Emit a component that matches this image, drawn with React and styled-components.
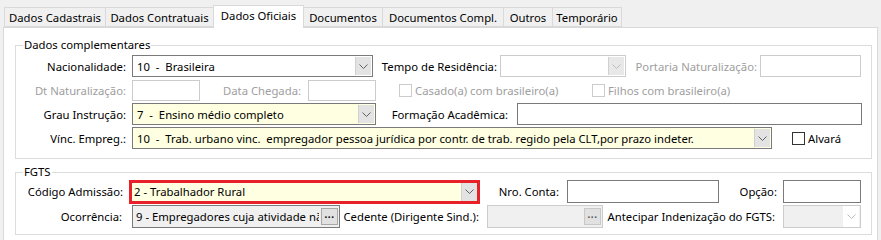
import React from "react";
import styled, { createGlobalStyle } from "styled-components";

const GlobalStyle = createGlobalStyle`
  body {
    margin: 0;
    background: #f0f0f0;
    font-family: "Noto Sans", "Segoe UI", sans-serif;
    font-size: 11.3px;
    color: #000;
  }
`;

const Page = styled.div`
  padding-top: 5px;
  width: 881px;
  height: 240px;
  overflow: hidden;
`;

const TabBar = styled.div`
  display: flex;
  align-items: flex-end;
  height: 22px;
  padding-left: 4px;
`;

const Tab = styled.div`
  box-sizing: border-box;
  width: ${(p) => p.$w}px;
  height: ${(p) => (p.$active ? 23 : 20)}px;
  margin-bottom: ${(p) => (p.$active ? -1 : 0)}px;
  margin-left: -1px;
  border: 1px solid #d9d9d9;
  border-bottom: ${(p) => (p.$active ? "none" : "1px solid #d9d9d9")};
  background: ${(p) => (p.$active ? "#fff" : "#f0f0f0")};
  position: relative;
  z-index: ${(p) => (p.$active ? 2 : 1)};
  display: flex;
  align-items: center;
  justify-content: center;
  padding-bottom: ${(p) => (p.$active ? 3 : 0)}px;
  white-space: nowrap;
  &:first-child {
    margin-left: 0;
  }
`;

const Panel = styled.div`
  box-sizing: border-box;
  margin: 0 3px;
  height: 230px;
  background: #fff;
  border: 1px solid #d9d9d9;
  padding: 10px 5px 0 11px;
`;

const Group = styled.fieldset`
  margin: 0 0 ${(p) => p.$mb || 0}px 0;
  padding: ${(p) => p.$pt}px 0 ${(p) => p.$pb}px 0;
  border: 1px solid #dcdcdc;
  min-width: 0;
`;

const Legend = styled.legend`
  margin-left: 7px;
  padding: 0 1px;
  line-height: 14px;
`;

const Row = styled.div`
  display: flex;
  align-items: center;
  height: ${(p) => p.$h}px;
`;

const Label = styled.div`
  box-sizing: border-box;
  flex: none;
  width: ${(p) => p.$w}px;
  padding-right: ${(p) => p.$pr ?? 6}px;
  text-align: right;
  white-space: nowrap;
  color: ${(p) => (p.$muted ? "#9e9e9e" : "#000")};
`;

const Edit = styled.div`
  box-sizing: border-box;
  flex: none;
  display: flex;
  align-items: center;
  width: ${(p) => p.$w}px;
  height: ${(p) => p.$h || 22}px;
  border: 1px solid ${(p) => (p.$muted ? "#cccccc" : "#7a7a7a")};
  background: ${(p) => p.$bg || "#fff"};
  overflow: hidden;
`;

const Combo = styled(Edit)`
  border: ${(p) => (p.$mark ? "3px solid #e8202a" : `1px solid ${p.$muted ? "#cccccc" : "#7a7a7a"}`)};
  padding-right: ${(p) => (p.$mark ? 0 : 1)}px;
`;

const Value = styled.span`
  flex: 1;
  min-width: 0;
  padding-left: ${(p) => p.$pl ?? 4}px;
  white-space: pre;
  overflow: hidden;
`;

const DropButton = styled.div`
  flex: none;
  align-self: stretch;
  width: 15px;
  margin: ${(p) => (p.$flat ? 0 : "1px 0")};
  display: flex;
  align-items: center;
  justify-content: center;
  background: ${(p) => (p.$muted ? "#fff" : p.$light ? "#e8e8e8" : "#e3e3e3")};
  border-left: 1px solid ${(p) => (p.$muted ? "#fff" : "#d0d0d0")};
`;

const DotsButton = styled.div`
  box-sizing: border-box;
  flex: none;
  width: 17px;
  height: 17px;
  margin: 0 1px 0 2px;
  border: 1px solid ${(p) => (p.$muted ? "#c8c8c8" : "#a8a8a8")};
  background: #e1e1e1;
  display: flex;
  align-items: center;
  justify-content: center;
  font-weight: bold;
  font-size: 10px;
  line-height: 1;
  letter-spacing: 0.5px;
  padding-bottom: 5px;
  color: ${(p) => (p.$muted ? "#555" : "#000")};
`;

const Check = styled.label`
  flex: none;
  display: flex;
  align-items: center;
  gap: 3px;
  width: ${(p) => (p.$w ? `${p.$w}px` : "auto")};
  margin-left: ${(p) => p.$ml || 0}px;
  color: ${(p) => (p.$muted ? "#9e9e9e" : "#000")};
  white-space: nowrap;
`;

const Box = styled.span`
  box-sizing: border-box;
  width: 13px;
  height: 13px;
  border: 1px solid ${(p) => (p.$muted ? "#cccccc" : "#333")};
  background: #fff;
`;

const Chevron = ({ muted }) => (
  <svg width="9" height="5" viewBox="0 0 9 5">
    <path d="M0.5 0.5 L4.5 4.5 L8.5 0.5" fill="none" stroke={muted ? "#bdbdbd" : "#606060"} strokeWidth="1" />
  </svg>
);

const YELLOW = "#ffffe1";

const tabs = [
  ["Dados Cadastrais", 102],
  ["Dados Contratuais", 109],
  ["Dados Oficiais", 91, true],
  ["Documentos", 80],
  ["Documentos Compl.", 122],
  ["Outros", 50],
  ["Temporário", 70],
];

export default function App() {
  return (
    <Page>
      <GlobalStyle />
      <TabBar>
        {tabs.map(([t, w, a]) => (
          <Tab key={t} $w={w} $active={a}>
            {t}
          </Tab>
        ))}
      </TabBar>
      <Panel>
        <Group $pt={2} $pb={8} $mb={6}>
          <Legend>Dados complementares</Legend>
          <Row $h={24}>
            <Label $w={116}>Nacionalidade:</Label>
            <Combo $w={241}>
              <Value>{"10  -  Brasileira"}</Value>
              <DropButton>
                <Chevron />
              </DropButton>
            </Combo>
            <Label $w={127} $pr={3}>Tempo de Residência:</Label>
            <Combo $w={126} $muted>
              <Value />
              <DropButton $light>
                <Chevron muted />
              </DropButton>
            </Combo>
            <Label $w={134} $pr={3} $muted>Portaria Naturalização:</Label>
            <Edit $w={101} $muted />
          </Row>
          <Row $h={24}>
            <Label $w={116} $muted>Dt Naturalização:</Label>
            <Edit $w={68} $h={21} $muted />
            <Label $w={108} $pr={7} $muted>Data Chegada:</Label>
            <Edit $w={68} $h={21} $muted />
            <Check $ml={23} $w={193} $muted>
              <Box $muted />
              Casado(a) com brasileiro(a)
            </Check>
            <Check $muted>
              <Box $muted />
              Filhos com brasileiro(a)
            </Check>
          </Row>
          <Row $h={24}>
            <Label $w={116}>Grau Instrução:</Label>
            <Combo $w={244} $bg={YELLOW}>
              <Value>{"7  -  Ensino médio completo"}</Value>
              <DropButton>
                <Chevron />
              </DropButton>
            </Combo>
            <Label $w={141} $pr={9}>Formação Acadêmica:</Label>
            <Edit $w={345} />
          </Row>
          <Row $h={24}>
            <Label $w={116}>Vínc. Empreg.:</Label>
            <Combo $w={640} $bg={YELLOW}>
              <Value>
                {"10  -  Trab. urbano vinc.  empregador pessoa jurídica por contr. de trab. regido pela CLT,por prazo indeter."}
              </Value>
              <DropButton>
                <Chevron />
              </DropButton>
            </Combo>
            <Check $ml={20}>
              <Box />
              Alvará
            </Check>
          </Row>
        </Group>
        <Group $pt={0} $pb={6}>
          <Legend>FGTS</Legend>
          <Row $h={25}>
            <Label $w={113}>Código Admissão:</Label>
            <Combo $w={351} $h={24} $bg={YELLOW} $mark>
              <Value $pl={2}>{"2 - Trabalhador Rural"}</Value>
              <DropButton $flat>
                <Chevron />
              </DropButton>
            </Combo>
            <Label $w={87} $pr={8}>Nro. Conta:</Label>
            <Edit $w={152} $h={23} />
            <Label $w={64} $pr={6}>Opção:</Label>
            <Edit $w={78} $h={23} />
          </Row>
          <Row $h={24}>
            <Label $w={116} $pr={10}>Ocorrência:</Label>
            <Edit $w={208} $h={23} $bg="#f0f0f0">
              <Value $pl={3}>{"9 - Empregadores cuja atividade nã"}</Value>
              <DotsButton>...</DotsButton>
            </Edit>
            <Label $w={147} $pr={8}>Cedente (Dirigente Sind.):</Label>
            <Edit $w={116} $h={23} $bg="#f0f0f0" $muted>
              <Value />
              <DotsButton $muted>...</DotsButton>
            </Edit>
            <Label $w={180} $pr={8}>Antecipar Indenização do FGTS:</Label>
            <Combo $w={78} $h={23} $bg="#f0f0f0" $muted>
              <Value />
              <DropButton $muted $flat>
                <Chevron muted />
              </DropButton>
            </Combo>
          </Row>
        </Group>
      </Panel>
    </Page>
  );
}
